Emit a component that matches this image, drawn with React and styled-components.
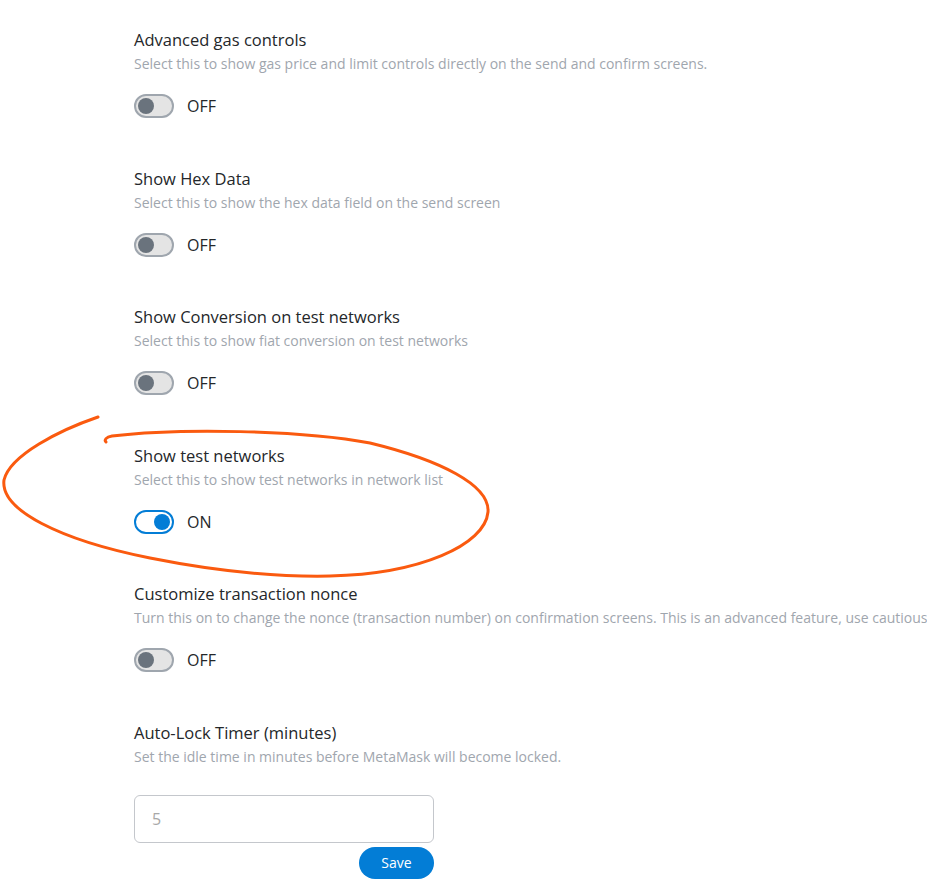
import React from "react";
import styled, { createGlobalStyle } from "styled-components";

const Global = createGlobalStyle`
  html, body { margin: 0; padding: 0; background: #fff; overflow: hidden; }
  body { font-family: "Open Sans", "Liberation Sans", sans-serif; }
`;

const Page = styled.div`
  position: relative;
  width: 927px;
  height: 884px;
  overflow: hidden;
  padding: 29px 0 0 134px;
  box-sizing: border-box;
`;

const Section = styled.div`
  display: flex;
  flex-direction: column;
  height: 138.6px;
`;

const Title = styled.div`
  font-size: 16.5px;
  line-height: 22px;
  color: #24272a;
  white-space: nowrap;
`;

const Desc = styled.div`
  font-size: 14px;
  line-height: 26px;
  color: #9fa6ae;
  white-space: nowrap;
`;

const ToggleRow = styled.div`
  display: flex;
  align-items: center;
  gap: 13px;
  margin-top: 17px;
`;

const Track = styled.div`
  width: 40px;
  height: 24px;
  box-sizing: border-box;
  border-radius: 12px;
  border: 2px solid ${p => (p.$on ? "#037dd6" : "#9fa6ae")};
  background: ${p => (p.$on ? "#fff" : "#e4e4e4")};
  display: flex;
  align-items: center;
  justify-content: ${p => (p.$on ? "flex-end" : "flex-start")};
  padding: 0 2px;
`;

const Knob = styled.div`
  width: 16px;
  height: 16px;
  border-radius: 50%;
  background: ${p => (p.$on ? "#037dd6" : "#6a737d")};
`;

const ToggleLabel = styled.span`
  font-size: 16px;
  color: #24272a;
`;

const InputBox = styled.div`
  width: 300px;
  height: 48px;
  box-sizing: border-box;
  border: 1px solid #c4c7cc;
  border-radius: 6px;
  display: flex;
  align-items: center;
  padding-left: 17px;
  font-size: 16px;
  color: #a8a8a8;
  margin-top: 25px;
`;

const SaveRow = styled.div`
  width: 300px;
  display: flex;
  justify-content: flex-end;
  margin-top: 4px;
`;

const SaveButton = styled.button`
  width: 75px;
  height: 32px;
  border: none;
  border-radius: 16px;
  background: #037dd6;
  color: #fff;
  font-family: inherit;
  font-size: 14px;
  padding: 0;
`;

const Scribble = styled.svg`
  position: absolute;
  left: 0;
  top: 0;
  pointer-events: none;
`;

const items = [
  ["Advanced gas controls", "Select this to show gas price and limit controls directly on the send and confirm screens.", false],
  ["Show Hex Data", "Select this to show the hex data field on the send screen", false],
  ["Show Conversion on test networks", "Select this to show fiat conversion on test networks", false],
  ["Show test networks", "Select this to show test networks in network list", true],
  ["Customize transaction nonce", "Turn this on to change the nonce (transaction number) on confirmation screens. This is an advanced feature, use cautiously.", false],
];

export default function App() {
  return (
    <>
      <Global />
      <Page>
        {items.map(([t, d, on]) => (
          <Section key={t}>
            <Title>{t}</Title>
            <Desc>{d}</Desc>
            <ToggleRow>
              <Track $on={on}><Knob $on={on} /></Track>
              <ToggleLabel>{on ? "ON" : "OFF"}</ToggleLabel>
            </ToggleRow>
          </Section>
        ))}
        <Title>Auto-Lock Timer (minutes)</Title>
        <Desc>Set the idle time in minutes before MetaMask will become locked.</Desc>
        <InputBox>5</InputBox>
        <SaveRow><SaveButton>Save</SaveButton></SaveRow>
        <Scribble width="927" height="884" viewBox="0 0 927 884">
          <path
            d="M98,417 C60,430 10,455 4,480 C0,510 60,540 150,558 C220,572 280,577 330,576 C420,574 485,545 488,512 C490,485 440,460 370,443 C300,430 180,428 112,436 C106,437 104,440 106,442"
            fill="none"
            stroke="#fa5a0f"
            strokeWidth="3"
            strokeLinecap="round"
          />
        </Scribble>
      </Page>
    </>
  );
}
